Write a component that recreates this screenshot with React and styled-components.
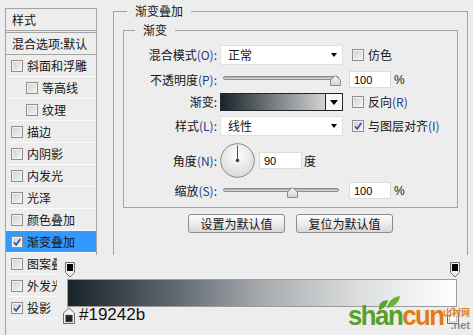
import React from 'react';
import styled, { createGlobalStyle } from 'styled-components';

const GlobalStyle = createGlobalStyle`
  html, body { margin: 0; padding: 0; background: #ededed; }
  body {
    font-family: "Noto Sans CJK SC", "Liberation Sans", sans-serif;
    font-size: 12px;
    color: #151515;
  }
  * { box-sizing: border-box; }
`;

const Window = styled.div`
  position: relative;
  width: 473px;
  height: 335px;
  overflow: hidden;
  background: #ededed;
  display: flex;
  align-items: flex-start;
  padding-left: 5px;
`;

/* ---------- left styles list ---------- */
const StylePanel = styled.div`
  width: 92px;
  height: 340px;
  margin-top: 8px;
  border: 1px solid #a3a3a3;
  border-bottom: none;
  display: flex;
  flex-direction: column;
  overflow: hidden;
`;

const PanelHeader = styled.div`
  height: 22px;
  border-bottom: 1px solid #a3a3a3;
  margin-bottom: 1px;
  padding-left: 6px;
  display: flex;
  align-items: center;
  line-height: 14px;
`;

const BlendRow = styled.div`
  height: 23px;
  border-top: 1px solid #a3a3a3;
  border-bottom: 1px solid #a3a3a3;
  padding-left: 6px;
  display: flex;
  align-items: center;
  white-space: nowrap;
  line-height: 14px;
`;

const StyleRow = styled.div`
  height: 22px;
  border-bottom: 1px solid #fbfbfb;
  display: flex;
  align-items: center;
  gap: 4px;
  padding-left: ${p => (p.$indent ? 20 : 5)}px;
  background: ${p => (p.$selected ? '#3399ff' : 'transparent')};
  white-space: nowrap;
  line-height: 14px;
`;

const Box = styled.span`
  width: 12px;
  height: 12px;
  flex-shrink: 0;
  border: 1px solid #8e8e8e;
  background: linear-gradient(135deg, #cfcfcf, #f6f6f6);
  box-shadow: inset 0 0 0 1px #f2f2f2;
  display: flex;
  align-items: center;
  justify-content: center;
`;

const Checkbox = ({ checked }) => (
  <Box>
    {checked && (
      <svg width="10" height="10" viewBox="0 0 10 10">
        <path d="M2 5.2 L4.2 7.8 L8.3 2" fill="none" stroke="#3c52a6" strokeWidth="1.7" />
      </svg>
    )}
  </Box>
);

/* ---------- right group boxes ---------- */
const OuterGroup = styled.fieldset`
  margin: 4px 0 0 16px;
  width: 355px;
  min-height: 340px;
  border: 1px solid #a3a3a3;
  padding: 5px 9px 0 9px;
  min-width: 0;
`;

const GroupTitle = styled.legend`
  margin-left: ${p => p.$offset}px;
  padding: 0 8px;
  font-size: 12px;
  line-height: 14px;
`;

const InnerGroup = styled.fieldset`
  margin: 0;
  width: 335px;
  border: 1px solid #a3a3a3;
  padding: 8px 0 8px 0;
  min-width: 0;
`;

const FormRow = styled.div`
  display: flex;
  align-items: center;
  height: ${p => p.$h}px;
  margin-top: ${p => p.$mt || 0}px;
`;

const Label = styled.div`
  width: 93px;
  margin-right: 3px;
  flex-shrink: 0;
  text-align: right;
  white-space: nowrap;
  line-height: 14px;
`;

const Key = styled.span`
  color: #1d3a8c;
`;

const Select = styled.div`
  width: 123px;
  height: 20px;
  background: #fff;
  border: 1px solid #e0e0e0;
  display: flex;
  align-items: center;
  justify-content: space-between;
  padding: 0 5px 0 7px;
  line-height: 14px;
`;

const Caret = styled.span`
  width: 0;
  height: 0;
  border-left: ${p => p.$w / 2}px solid transparent;
  border-right: ${p => p.$w / 2}px solid transparent;
  border-top: ${p => p.$t}px solid #000;
`;

const CheckLabel = styled.div`
  display: flex;
  align-items: center;
  gap: 4px;
  margin-left: 9px;
  white-space: nowrap;
  line-height: 14px;
`;

const Slider = styled.div`
  position: relative;
  width: 123px;
  height: 17px;
  display: flex;
  align-items: flex-start;
  padding: ${p => p.$top}px 4px 0 3px;
`;

const Track = styled.div`
  flex: 1;
  height: 4px;
  border-radius: 2px;
  border: 1px solid #8c8c8c;
  background: linear-gradient(#a9a9a9, #dedede);
`;

const ThumbHolder = styled.div`
  position: absolute;
  top: ${p => p.$top}px;
  width: 11px;
  height: 11px;
  display: flex;
`;

const Thumb = ({ left, top }) => (
  <ThumbHolder $top={top} style={{ left }}>
    <svg width="11" height="11" viewBox="0 0 11 11">
      <defs>
        <linearGradient id="tg" x1="0" y1="0" x2="0" y2="1">
          <stop offset="0" stopColor="#f8f8f8" />
          <stop offset="1" stopColor="#d2d2d2" />
        </linearGradient>
      </defs>
      <polygon points="0.5,10.5 0.5,5 5.5,0.5 10.5,5 10.5,10.5" fill="url(#tg)" stroke="#8a8a8a" />
    </svg>
  </ThumbHolder>
);

const Field = styled.div`
  width: ${p => p.$w}px;
  height: 17px;
  margin-left: ${p => p.$ml}px;
  background: #fff;
  border: 1px solid #dcdcdc;
  display: flex;
  align-items: center;
  padding-left: 4px;
  font-family: "Liberation Sans", Arial, sans-serif;
  font-size: 11px;
  color: #000;
`;

const Unit = styled.span`
  margin-left: ${p => p.$ml}px;
  font-family: ${p => (p.$latin ? '"Liberation Sans", Arial, sans-serif' : 'inherit')};
  font-size: 12px;
  line-height: 14px;
`;

const Swatch = styled.div`
  width: 123px;
  height: 18px;
  border: 1px solid #262626;
  display: flex;
`;

const SwatchFill = styled.div`
  flex: 1;
  background: linear-gradient(90deg, #19242b, #d2d3d3);
`;

const SwatchButton = styled.div`
  width: 17px;
  border-left: 1px solid #262626;
  background: #f7f7f7;
  display: flex;
  align-items: center;
  justify-content: center;
`;

const Dial = () => (
  <svg width="35" height="35" viewBox="0 0 35 35">
    <defs>
      <radialGradient id="dg" cx="0.5" cy="0.35" r="0.7">
        <stop offset="0" stopColor="#ffffff" />
        <stop offset="1" stopColor="#d6d6d6" />
      </radialGradient>
    </defs>
    <circle cx="17.5" cy="17.5" r="16.8" fill="url(#dg)" stroke="#8a8a8a" />
    <line x1="17.5" y1="17.5" x2="17.5" y2="2.5" stroke="#555" strokeWidth="1" />
    <circle cx="17.5" cy="17.5" r="1.8" fill="#444" />
  </svg>
);

const ButtonBar = styled.div`
  display: flex;
  justify-content: center;
  gap: 11px;
  margin-top: 6px;
`;

const PushButton = styled.button`
  width: 97px;
  height: 19px;
  padding: 0;
  border: 1px solid #8b8b8b;
  border-radius: 3px;
  background: linear-gradient(#fdfdfd, #ececec 50%, #d8d8d8);
  font-family: "Noto Sans CJK SC", sans-serif;
  font-size: 12px;
  line-height: 14px;
  color: #151515;
`;

/* ---------- gradient editor overlay ---------- */
const GradientEditor = styled.div`
  position: absolute;
  left: 57px;
  top: 255px;
  right: 0;
  bottom: 0;
  background: #ededed;
  padding: 7px 0 0 10px;
  display: flex;
  flex-direction: column;
`;

const StopLane = styled.div`
  position: relative;
  width: 390px;
  height: 17px;
`;

const StopPin = styled.div`
  position: absolute;
  top: 0;
  display: flex;
`;

const GradientBar = styled.div`
  width: 390px;
  height: 28px;
  border: 1px solid #9c9c9c;
  background: linear-gradient(90deg, #19242b 0%, #59606a 25%, #a7abae 50%, #dcdedf 75%, #ffffff 100%);
`;

const ColorRow = styled.div`
  position: relative;
  width: 390px;
  display: flex;
  align-items: flex-start;
  margin-left: -4px;
`;

const HexText = styled.span`
  margin-left: 4px;
  font-family: "Liberation Sans", Arial, sans-serif;
  font-size: 17px;
  line-height: 16px;
  color: #111;
`;

const TopStop = ({ fill }) => (
  <svg width="11" height="16" viewBox="0 0 11 16">
    <path d="M0.5 0.5 H9.5 V10.5 L5 15 L0.5 10.5 Z" fill="#f2f2f2" stroke="#6d6d6d" />
    <rect x="2" y="2" width="6" height="7" fill={fill} />
  </svg>
);

const BottomStop = ({ fill }) => (
  <svg width="12" height="17" viewBox="0 0 12 17">
    <path d="M0.5 16.5 H11.5 V6 L6 0.8 L0.5 6 Z" fill="#f2f2f2" stroke="#6d6d6d" />
    <rect x="2.5" y="8" width="7" height="7" fill={fill} stroke="#8a8a8a" strokeWidth="0.5" />
  </svg>
);

/* ---------- watermark ---------- */
const Watermark = styled.div`
  position: absolute;
  left: 346px;
  top: 295px;
  width: 127px;
  height: 40px;
  z-index: 2;
`;

const Leaves = styled.svg`
  position: absolute;
  left: 30px;
  top: 0;
`;

const MarkText = styled.div`
  position: absolute;
  left: 2px;
  top: 8px;
  font-family: "Liberation Sans", Arial, sans-serif;
  font-weight: 700;
  font-size: 28px;
  line-height: 26px;
  letter-spacing: -1.6px;
  transform: scaleX(0.92);
  transform-origin: left top;
  white-space: nowrap;
`;

const Green = styled.span`
  color: #55a12a;
`;

const Orange = styled.span`
  color: #e27b12;
`;

const MarkSmall = styled.div`
  position: absolute;
  right: 3px;
  top: ${p => p.$top}px;
  font-family: ${p => (p.$cjk ? '"Noto Sans CJK SC", sans-serif' : '"Liberation Sans", Arial, sans-serif')};
  font-size: ${p => p.$size}px;
  font-weight: 700;
  line-height: 1;
  color: ${p => p.$color};
  white-space: nowrap;
`;

const rows = [
  { label: '斜面和浮雕' },
  { label: '等高线', indent: true },
  { label: '纹理', indent: true },
  { label: '描边' },
  { label: '内阴影' },
  { label: '内发光' },
  { label: '光泽' },
  { label: '颜色叠加' },
  { label: '渐变叠加', checked: true, selected: true },
  { label: '图案叠加' },
  { label: '外发光' },
  { label: '投影', checked: true },
];

export default function App() {
  return (
    <>
      <GlobalStyle />
      <Window>
        <StylePanel>
          <PanelHeader>样式</PanelHeader>
          <BlendRow>混合选项:默认</BlendRow>
          {rows.map(r => (
            <StyleRow key={r.label} $indent={r.indent} $selected={r.selected}>
              <Checkbox checked={r.checked} />
              <span>{r.label}</span>
            </StyleRow>
          ))}
          <StyleRow />
        </StylePanel>

        <OuterGroup>
          <GroupTitle $offset={4}>渐变叠加</GroupTitle>
          <InnerGroup>
            <GroupTitle $offset={11}>渐变</GroupTitle>

            <FormRow $h={20}>
              <Label>混合模式<Key>(O):</Key></Label>
              <Select>
                <span>正常</span>
                <Caret $w={6} $t={4} />
              </Select>
              <CheckLabel>
                <Checkbox />
                <span>仿色</span>
              </CheckLabel>
            </FormRow>

            <FormRow $h={17} $mt={6}>
              <Label>不透明度<Key>(P):</Key></Label>
              <Slider $top={5}>
                <Track />
                <Thumb left={110} top={4} />
              </Slider>
              <Field $w={42} $ml={6}>100</Field>
              <Unit $ml={3} $latin>%</Unit>
            </FormRow>

            <FormRow $h={18} $mt={5}>
              <Label>渐变:</Label>
              <Swatch>
                <SwatchFill />
                <SwatchButton>
                  <Caret $w={8} $t={5} />
                </SwatchButton>
              </Swatch>
              <CheckLabel>
                <Checkbox />
                <span>反向<Key>(R)</Key></span>
              </CheckLabel>
            </FormRow>

            <FormRow $h={20} $mt={5}>
              <Label>样式<Key>(L):</Key></Label>
              <Select>
                <span>线性</span>
                <Caret $w={6} $t={4} />
              </Select>
              <CheckLabel>
                <Checkbox checked />
                <span>与图层对齐<Key>(I)</Key></span>
              </CheckLabel>
            </FormRow>

            <FormRow $h={35} $mt={7}>
              <Label>角度<Key>(N):</Key></Label>
              <Dial />
              <Field $w={43} $ml={4}>90</Field>
              <Unit $ml={2}>度</Unit>
            </FormRow>

            <FormRow $h={17} $mt={4}>
              <Label>缩放<Key>(S):</Key></Label>
              <Slider $top={6}>
                <Track />
                <Thumb left={67} top={5} />
              </Slider>
              <Field $w={42} $ml={6}>100</Field>
              <Unit $ml={3} $latin>%</Unit>
            </FormRow>
          </InnerGroup>

          <ButtonBar>
            <PushButton>设置为默认值</PushButton>
            <PushButton>复位为默认值</PushButton>
          </ButtonBar>
        </OuterGroup>

        <GradientEditor>
          <StopLane>
            <StopPin style={{ left: -2 }}><TopStop fill="#000" /></StopPin>
            <StopPin style={{ left: 383 }}><TopStop fill="#000" /></StopPin>
          </StopLane>
          <GradientBar />
          <ColorRow>
            <BottomStop fill="#19242b" />
            <HexText>#19242b</HexText>
            <StopPin style={{ left: 384 }}><BottomStop fill="#ffffff" /></StopPin>
          </ColorRow>
        </GradientEditor>

        <Watermark>
          <Leaves width="26" height="16" viewBox="0 0 26 16">
            <path d="M3 15 C2 9 6 5 12 5 C11 10 8 14 3 15 Z" fill="#5aa42c" />
            <path d="M11 13 C12 6 17 2 24 1 C23 8 18 12 11 13 Z" fill="#6ab536" />
          </Leaves>
          <MarkText>
            <Green>shan</Green><Orange>cun</Orange>
          </MarkText>
          <MarkSmall $top={13} $size={9} $color="#d9822b" $cjk>山村网</MarkSmall>
          <MarkSmall $top={25} $size={11} $color="#7d8f99">.net</MarkSmall>
        </Watermark>
      </Window>
    </>
  );
}
